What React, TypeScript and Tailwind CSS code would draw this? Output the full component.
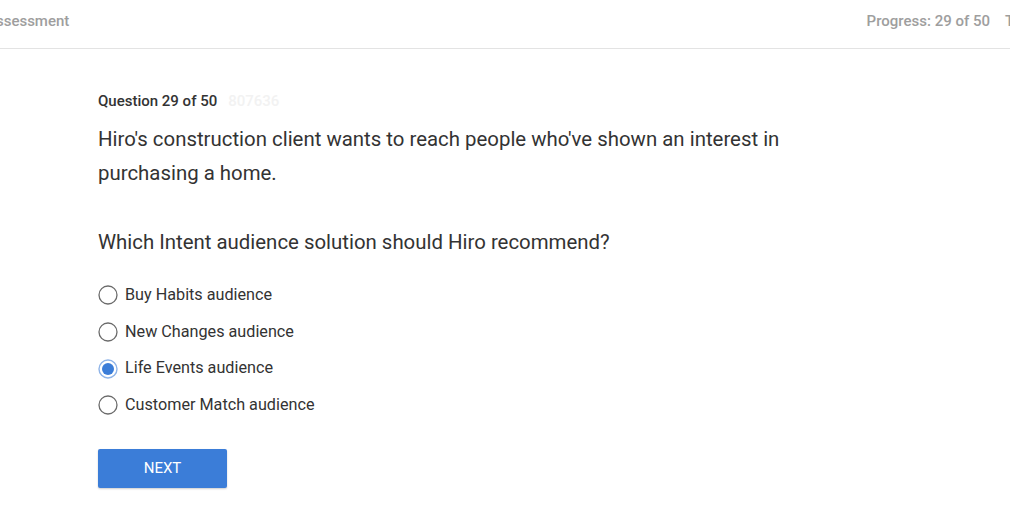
import { useState } from "react";

const options = [
  "Buy Habits audience",
  "New Changes audience",
  "Life Events audience",
  "Customer Match audience",
];

function Radio({ checked }: { checked: boolean }) {
  return (
    <svg width="20" height="20" viewBox="0 0 20 20" className="shrink-0">
      {checked ? (
        <>
          <circle cx="10" cy="10" r="9" fill="white" stroke="#8fb4e8" strokeWidth="1.4" />
          <circle cx="10" cy="10" r="6" fill="#3b7dd8" />
        </>
      ) : (
        <circle cx="10" cy="10" r="9" fill="white" stroke="#6b6b6b" strokeWidth="1.3" />
      )}
    </svg>
  );
}

export default function App() {
  const [selected, setSelected] = useState(2);

  return (
    <div className="w-full overflow-hidden bg-white text-[#333] font-['Roboto',_'Liberation_Sans',_sans-serif]">
      <div className="flex h-[49px] items-center border-b border-[#e3e3e3] pb-[5px] text-[15px] font-medium text-[#9e9e9e] whitespace-nowrap">
        <span className="-ml-[14px]">Assessment</span>
        <div className="ml-auto flex items-center">
          <span>Progress: 29 of 50</span>
          <span className="ml-[15px] w-[5px] overflow-visible">Time</span>
        </div>
      </div>

      <div className="pl-[98px] pt-[42px] pb-[40px]">
        <div className="flex items-center text-[15px] font-medium leading-[20px] text-[#333]">
          <span>Question 29 of 50</span>
          <span className="ml-[11px] text-[#f2f2f2]">807636</span>
        </div>

        <div className="mt-[11px] max-w-[720px] text-[20.4px] leading-[34px] text-[#333]">
          <p>Hiro's construction client wants to reach people who've shown an interest in purchasing a home.</p>
          <p className="mt-[35px]">Which Intent audience solution should Hiro recommend?</p>
        </div>

        <div className="mt-[18px] flex flex-col">
          {options.map((o, i) => (
            <label
              key={o}
              onClick={() => setSelected(i)}
              className="flex h-[36.67px] cursor-pointer items-center gap-[7px] text-[16.2px] text-[#333]"
            >
              <Radio checked={selected === i} />
              <span>{o}</span>
            </label>
          ))}
        </div>

        <button className="mt-[25px] flex h-[39px] w-[129px] items-center justify-center rounded-[2px] bg-[#3b7dd8] text-[15px] text-white shadow-[0_1px_2px_rgba(0,0,0,0.2)]">
          NEXT
        </button>
      </div>
    </div>
  );
}
